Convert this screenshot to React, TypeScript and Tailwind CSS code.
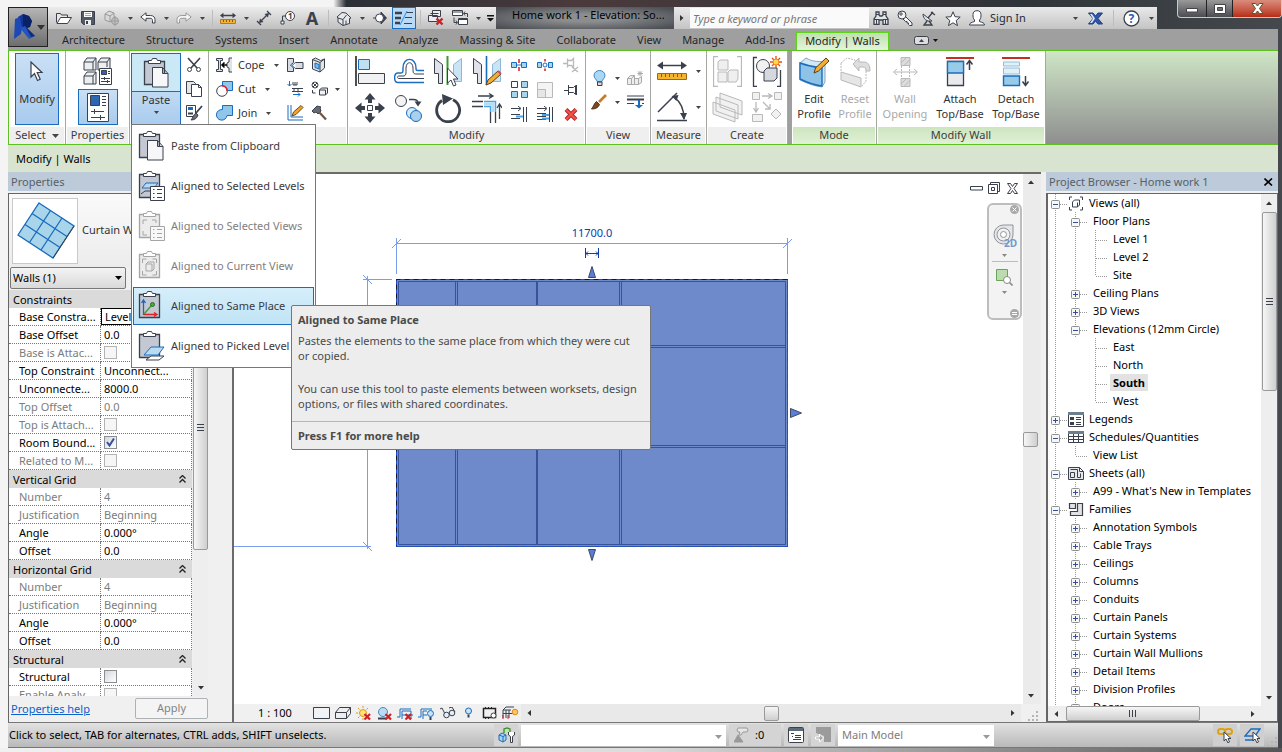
import type { ReactNode } from 'react'

const INK = '#3b414c'
const BLUE = '#1a6cbf'
const SKY = '#a9d5ec'
const GREY = '#b9b9b9'

interface IconProps {
  w: number
  h: number
  children: ReactNode
  stroke?: string
}

function Icon({ w, h, children, stroke = INK }: IconProps) {
  return (
    <svg width={w} height={h} viewBox={`0 0 ${w} ${h}`} fill="none" stroke={stroke} strokeWidth="1" className="shrink-0" aria-hidden="true">
      {children}
    </svg>
  )
}

function Caret({ color = '#444' }: { color?: string }) {
  return (
    <Icon w={5} h={3} stroke="none">
      <path d="M0 0h5L2.500 3z" fill={color} />
    </Icon>
  )
}

function ScrollArrow({ dir }: { dir: 'up' | 'down' | 'left' | 'right' }) {
  const paths = { up: 'M1 6l3-3.500l3 3.500z', down: 'M1 2h6L4 5.500z', left: 'M6 1v6L2.500 4z', right: 'M2 1v6l3.500-3z' }
  return (
    <Icon w={8} h={8} stroke="none">
      <path d={paths[dir]} fill="#333" />
    </Icon>
  )
}

/* ---------- quick access icons ---------- */

const openIcon = (
  <Icon w={16} h={12}>
    <path d="M.5 10.500V1.500h4l1 1.500h6v2" fill="#e8e8e8" />
    <path d="M1 11.500l3.500-6h11l-4 6z" fill="#fff" />
  </Icon>
)
const saveIcon = (
  <Icon w={14} h={14}>
    <path d="M.5.5h13v13h-11l-2-2z" fill="#535965" />
    <path d="M3 1h8v5H3z" fill="#fff" stroke="none" />
    <path d="M4 2.500h6M4 4.500h6" stroke="#9aa" />
    <path d="M4 9h6v5H4z" fill="#eee" stroke="none" />
    <path d="M5 10h2v3H5z" fill={INK} stroke="none" />
  </Icon>
)
const syncIcon = (
  <Icon w={16} h={16} stroke="#999">
    <path d="M1 4l4-3 5 2v6l-4 3-5-2zM1 4l5 2 4-3M6 6v6" fill="#d9d9d9" />
    <circle cx="11" cy="11" r="3.500" fill="#c4c4c4" />
    <path d="M11 6v10M7.500 11h7" />
  </Icon>
)
const undoIcon = (
  <Icon w={16} h={12}>
    <path d="M.8 5L6 .8v2.700h4.500c3 0 4.500 2 4.500 4v3.500h-2.500V8.500c0-1.500-.8-2.200-2.300-2.200H6v2.900z" fill="#fff" />
  </Icon>
)
const redoIcon = (
  <Icon w={16} h={12} stroke="#999">
    <path d="M15.200 5L10 .8v2.700H5.500C2.500 3.500 1 5.500 1 7.500V11h2.500V8.500c0-1.500.8-2.200 2.300-2.200H10v2.900z" fill="#f4f4f4" />
  </Icon>
)
const rulerSmall = (
  <Icon w={16} h={11}>
    <path d="M2 2.500h12M3.500.5l-2.500 2 2.500 2M12.500.5l2.500 2-2.500 2" strokeWidth="1.300" />
    <path d="M.5 6.500h15v4H.5z" fill="#f2b431" stroke="#b7791a" />
    <path d="M3.500 7v2M6.500 7v2M9.500 7v2M12.500 7v2" stroke="#8a5a10" />
  </Icon>
)
const dimIcon = (
  <Icon w={16} h={16}>
    <path d="M4 12L12 4M11 1l4 4M1 11l4 4" strokeWidth="1.300" />
    <path d="M8.500 4l4.500-1-1 4.500zM7.500 12L3 13l1-4.500z" fill={INK} stroke="none" />
  </Icon>
)
const tagIcon = (
  <Icon w={16} h={14}>
    <circle cx="10" cy="5" r="4.500" fill="#fff" />
    <path d="M5.500 5H2.500v5" />
    <path d="M1 10h3v3H1z" fill="#fff" />
    <text x="8" y="8" fontSize="8" fontWeight="700" fill={INK} stroke="none" fontFamily="Noto Sans, sans-serif">1</text>
  </Icon>
)
const houseIcon = (
  <Icon w={16} h={15}>
    <path d="M1 6l5-4.500 4 .5 5 5-1.500.5v5L7 14.500 2 11V7z" fill="#e6e8eb" />
    <path d="M7 14.500V8.500M2 7l5 1.500L10.500 4M10 9.500v4" />
  </Icon>
)
const sectionIcon = (
  <Icon w={14} h={14}>
    <path d="M8 1l5.500 6L8 13z" fill={INK} />
    <circle cx="6.500" cy="7" r="4" fill="#fff" />
    <path d="M0 7h2.500" />
  </Icon>
)
const thinIcon = (
  <Icon w={18} h={14}>
    <path d="M0 2h7M0 7h6M0 12h5" strokeWidth="2.400" />
    <path d="M11 1.500h7M10 6.500h7M9 12.500h8" />
    <path d="M12 0L5 14" stroke="#2a8ff0" />
  </Icon>
)
const closeHiddenIcon = (
  <Icon w={16} h={16}>
    <path d="M4.500.5h8v6h-8zM.5 5.500h9v6h-9zM2.500 3.500h8" fill="#eee" />
    <path d="M8.500 8.500l6 6M14.500 8.500l-6 6" stroke="#d21f26" strokeWidth="2.400" />
  </Icon>
)
const switchIcon = (
  <Icon w={17} h={16}>
    <path d="M.5.5h10v5H.5zM6.500 8.500h9v6h-9z" fill="#fff" />
    <path d="M.5 2h10M6.500 9.500h9" />
    <path d="M2 7.500v5h3M4 10.500l1.500 2-1.500 2M15.500 7V3.500H12M13 1.500l-1.500 2 1.500 2" />
  </Icon>
)

/* ---------- info centre icons ---------- */

const binoculars = (
  <Icon w={16} h={14}>
    <path d="M3 1h3v3l1 1h2l1-1V1h3v4l2 3v5.500h-5V9H6v4.500H1V8l2-3z" fill="#e4e7ea" strokeWidth="1.300" />
    <path d="M3 3.500h3M10 3.500h3M1 8.500h5M10 8.500h5M3.500 9v4M12.500 9v4" />
  </Icon>
)
const keyIcon = (
  <Icon w={16} h={16}>
    <path d="M8.500 6.500l6.500 6.500v2.500h-2.500l-1-1v-1.500h-1.500v-1.500H8.500L5.500 8.500" fill="#f5f5f5" />
    <circle cx="5" cy="5" r="4" fill="#f5f5f5" />
    <circle cx="4" cy="4" r="1.200" />
  </Icon>
)
const dishIcon = (
  <Icon w={14} h={15}>
    <path d="M1 3c0 5 4 8 9 7z" fill="#e3e6ea" />
    <path d="M6 7l5-6M9 1l4 3M5 10l-3 4h8l-3-4" strokeWidth="1.300" />
  </Icon>
)
const starIcon = (
  <Icon w={16} h={15}>
    <path d="M8 .8l2 4.900 5.200.4-4 3.400 1.300 5.100L8 11.800l-4.500 2.800 1.300-5.100-4-3.400L6 5.700z" fill="#fff" />
  </Icon>
)
const userIcon = (
  <Icon w={16} h={16}>
    <path d="M.5 15c0-2 2-2.500 5-3.500V10C4 8.500 4 6.500 4 4.500 4 2 5.500.7 8 .7s4 1.300 4 3.800c0 2 0 4-1.500 5.500v1.500c3 1 5 1.500 5 3.500z" fill="#fff" />
  </Icon>
)
const exchangeIcon = (
  <Icon w={15} h={13}>
    <path d="M.5 1h4.500l2.500 3L10 1h4.500L10 6.500l4.500 5.500H10L7.500 9 5 12H.5L5 6.500z" fill="#2f55a8" stroke="#24407e" />
    <path d="M2 2h2l3 4.500L4 11H2l3-4.500z" fill="#dbe4f5" stroke="none" />
  </Icon>
)
const helpIcon = (
  <Icon w={17} h={17}>
    <circle cx="8.500" cy="8.500" r="7.500" fill="#fff" strokeWidth="1.300" />
    <text x="5.500" y="13" fontSize="12" fontWeight="700" fill="#1a5fc0" stroke="none" fontFamily="Noto Sans, sans-serif">?</text>
  </Icon>
)

/* ---------- ribbon icons ---------- */

const cursorIcon = (
  <Icon w={14} h={21}>
    <path d="M1 1v15l3.500-3.500 3 7 2.700-1.200-3-6.800H12z" fill="#fff" strokeWidth="1.200" />
  </Icon>
)
const familyTypesIcon = (
  <Icon w={30} h={29}>
    <path d="M1 13V5l3-4h9v12zM15 13V5l3-4h9v12zM1 27v-8l3-4h9v12zM1 5h9v8M10 5l3-4M15 5h9v5M24 5l3-4M1 19h9v8M10 19l3-4" fill="#eceef0" />
    <path d="M16.500 11.500h12v16h-12z" fill="#fff" />
    <path d="M18.500 13.500h5v4h-5z" fill="#2b66ae" stroke={INK} />
    <path d="M25 14.500h2M25 16.500h2M18 21.500h9M21.500 20v3M18 24.500h9M24.500 23v3" />
  </Icon>
)
const propertiesIcon = (
  <Icon w={22} h={29}>
    <path d="M.5.500h21v28h-21z" fill="#fff" />
    <path d="M3.500 2.500h9v10h-9z" fill="#2b66ae" />
    <path d="M15 3.500h4M15 6.500h4M15 9.500h4M15 12.500h4M4 18.500h13M7.500 16v5M4 24.500h14M13.500 22v5" />
  </Icon>
)

function Clipboard({ faded = false, children }: { faded?: boolean; children?: ReactNode }) {
  const line = faded ? '#a5a5a5' : INK
  return (
    <Icon w={28} h={32} stroke={line}>
      <path d="M2.500 4.500h20v23h-20z" fill={faded ? '#ececec' : '#c3c8d2'} strokeWidth="1.300" />
      <path d="M6.500 6.500v-3h3l1-2h4l1 2h3v3z" fill="#fff" />
      {children}
    </Icon>
  )
}

const pasteIcon = (
  <Clipboard>
    <path d="M10.500 10.500h10l5.500 6v13.500H10.500zM20.500 10.500v6H26" fill="#f7f7f9" />
  </Clipboard>
)
const levelsIcon = (
  <Clipboard>
    <path d="M5 18l4-5h12l-4 5z" fill="#b9dcf2" stroke={BLUE} />
    <path d="M4 24l4-3h7" stroke={INK} />
    <path d="M13.500 16.500h14v14h-14z" fill="#fff" />
    <path d="M16 19.500h1.500M20 19.500h5M16 23.500h1.500M20 23.500h5M16 27.500h1.500M20 27.500h5" />
  </Clipboard>
)
const viewsIcon = (
  <Clipboard faded>
    <path d="M6 14v-4h4M15 10h4v3M6 21v4h4" />
    <path d="M13.500 16.500h14v14h-14z" fill="#f8f8f8" />
    <path d="M16 19.500h1.500M20 19.500h5M16 23.500h1.500M20 23.500h5M16 27.500h1.500M20 27.500h5" />
  </Clipboard>
)
const currentIcon = (
  <Clipboard faded>
    <path d="M5.500 13v-4h4M15.500 9h4v4M5.500 21v4h4M15.500 25h4v-4M9 14h6v7H9zM9 14l2-2h6v7l-2 2" />
  </Clipboard>
)
const sameIcon = (
  <Clipboard>
    <path d="M6.500 25V11M4.500 13l2-3 2 3" stroke="#1b63c4" strokeWidth="1.300" />
    <path d="M6.500 24.500h12M17 22.500l3 2-3 2" stroke="#e0212a" strokeWidth="1.300" />
    <path d="M7 24l7-8" stroke="#3f9a2e" strokeWidth="1.300" />
    <circle cx="15.500" cy="14.500" r="2" fill="#52a63c" stroke="#2c6e20" />
  </Clipboard>
)
const pickedIcon = (
  <Clipboard>
    <path d="M9 30l5-4h13l-5 4z" fill="#fff" />
    <path d="M7 25l7-8h13l-6 8z" fill="#b9dcf2" stroke={BLUE} />
  </Clipboard>
)

const scissors = (
  <Icon w={16} h={16}>
    <path d="M2 1l9 10M14 1L5 11" strokeWidth="1.600" />
    <circle cx="3.500" cy="12.500" r="2" />
    <circle cx="12.500" cy="12.500" r="2" />
  </Icon>
)
const copyPages = (
  <Icon w={17} h={16}>
    <path d="M.5.500h7l2 2v10h-9z" fill="#e4e6ea" />
    <path d="M5.500 3.500h7l3 3v9h-10zM12.500 3.500v3h3" fill="#fff" />
  </Icon>
)
const matchIcon = (
  <Icon w={17} h={16}>
    <path d="M.5.500h9v11h-9z" fill="#fff" />
    <path d="M2 2h5v3H2z" fill={BLUE} stroke="none" />
    <path d="M2 8.500h5M16 1l-6 7" strokeWidth="1.800" />
    <path d="M10 8l2 2c-1 3-3 5-7 5 2-2 2-5 5-7z" fill="#6d7078" />
  </Icon>
)
const copeIcon = (
  <Icon w={17} h={16}>
    <path d="M.5 1.500h6v2h-2v9h2v2h-6v-2h2v-9h-2zM16 1h-3v4l-2 1v4l2 1v4h3" fill="#e0e2e6" />
    <path d="M6 8h5M8.500 5.500L6 8l2.500 2.500" strokeWidth="1.600" stroke="#000" />
  </Icon>
)
const cutIcon = (
  <Icon w={17} h={16}>
    <path d="M6.500.500h10v9h-10z" fill="#8fc6ea" stroke={BLUE} />
    <circle cx="6" cy="10" r="5.300" fill="#fff" />
    <path d="M6 4.700A5.300 5.300 0 0 1 11.200 10" stroke="#e2202a" strokeWidth="1.600" />
  </Icon>
)
const joinIcon = (
  <Icon w={17} h={16}>
    <path d="M6.500.500h10v10h-5.500A5.300 5.300 0 1 1 6.500 4.600z" fill="#8fc6ea" stroke={BLUE} />
  </Icon>
)
const wallCutIcon = (
  <Icon w={17} h={14}>
    <path d="M.5.500h6v4l-3 2.500 3 3v3.500h-6zM8.500 4.500h7.500v6H8.500" fill="#d9dce0" />
    <path d="M9 4l-4 3.500L9 11" stroke={BLUE} />
  </Icon>
)
const wallJoinIcon = (
  <Icon w={16} h={16}>
    <path d="M1.500 2.500l3-1.500 5 2.500 4-1.500v9l-4.500 4-7.500-3zM1.500 2.500L9 5.500v9.500M9 5.500l4.500-3.500" fill="#e2e4e8" />
    <path d="M4 6l4 1.500V12L4 10.500z" fill="#7fb9e6" stroke={BLUE} />
  </Icon>
)
const splitFaceIcon = (
  <Icon w={17} h={16}>
    <path d="M2.500 0v5M.5 3l2 2 2-2M6 13.500h7M11 11.500l2 2-2 2" stroke={BLUE} />
    <path d="M6 1v3h4V1M8 1v3M5 7.500h11M5 10.500h11M7 7.500v3M11 7.500v3" />
  </Icon>
)
const demolishIcon = (
  <Icon w={17} h={16}>
    <circle cx="4" cy="4" r="3" />
    <path d="M2 2l4 4M6 2L2 6M1.500 9v3h3M8.500 9l2-2h6v5l-2 2h-6zM8.500 9h6v5" fill="#f1f1f1" />
  </Icon>
)
const beamIcon = (
  <Icon w={17} h={16}>
    <path d="M1 0v15h15M4 0v12h12" stroke={BLUE} />
    <path d="M5 11l1.500-4L14 .5l2 2L9 9.500z" fill="#f2a431" stroke="#6a4a1a" />
  </Icon>
)
const hammerIcon = (
  <Icon w={17} h={16}>
    <path d="M1 6l5-5 4 1-1 1 1 3-3 3-2-2-2 1z" fill="#666b74" />
    <path d="M8 7l7 7.500" stroke="#6e5544" strokeWidth="2.200" />
  </Icon>
)
const alignIcon = (
  <Icon w={30} h={30}>
    <path d="M1 0v30" strokeWidth="1.600" stroke="#222" />
    <path d="M3.500 3.500h11v10h-11z" fill="#bfe0f3" stroke={BLUE} />
    <path d="M3.500 17.500h26v10h-26z" fill="#f0f1f3" />
  </Icon>
)
const offsetIcon = (
  <Icon w={30} h={27}>
    <path d="M30 24.500H4c-4.500 0-4.500-9.500 0-9.500h3c2 0 2-1 2-5C9-1.500 22-1.500 22 10c0 2 0 2.500 2 2.500h6" stroke={BLUE} strokeWidth="1.400" />
    <path d="M30 20.500H5c-2 0-2-2.500 0-2.500h4c3.500 0 3-2.500 3-8 0-7 7-7 7 0 0 5 0 6 4 6h7" />
  </Icon>
)
const mirrorIcon = (
  <Icon w={30} h={31}>
    <path d="M1.500 2.500l8 6v19h-4v-10h-4z" fill="#dfe2e8" />
    <path d="M28.500 2.500l-8 6v17h8z" fill="#c9e4f4" stroke="#8cb9d8" />
    <path d="M14.500 0v29" stroke="#3f9a2e" strokeWidth="2" />
    <path d="M14.500 12v15l3.500-3 2.500 6 2.500-1-2.500-6h4.500z" fill="#fff" />
  </Icon>
)
const mirrorDrawIcon = (
  <Icon w={30} h={31}>
    <path d="M1.500 2.500l8 6v19h-4v-10h-4z" fill="#dfe2e8" />
    <path d="M28.500 2.500l-8 6v17h8z" fill="#c9e4f4" stroke="#8cb9d8" />
    <path d="M14.500 0v29" stroke={BLUE} strokeWidth="1.600" />
    <path d="M14 29l2-5 10-9 3 3-10 9z" fill="#f5ac33" stroke="#5b3f18" />
    <path d="M26 15l3 3" stroke="#c9506b" strokeWidth="2" />
  </Icon>
)
const moveIcon = (
  <Icon w={30} h={30} stroke="none">
    <path
      d="M15 0l5.500 6.500H17V10h-4V6.500H9.500zM15 30l5.500-6.500H17V20h-4v3.500H9.500zM0 15l6.500-5.500V13H10v4H6.500v3.500zM30 15l-6.500-5.500V13H20v4h3.500v3.500z"
      fill={INK}
    />
    <path d="M12.500 12.500h5v5h-5z" stroke={INK} fill="#fff" />
  </Icon>
)
const copyIcon = (
  <Icon w={30} h={30}>
    <circle cx="7" cy="8" r="5.500" fill="#f3f3f3" />
    <path d="M15 6.500h4c4 0 5 1 5 5" strokeWidth="1.500" />
    <path d="M20.500 8.500h7l-3.500 5z" fill={INK} stroke="none" />
    <circle cx="18" cy="20" r="5.500" fill="#d4e9f6" stroke={BLUE} />
    <circle cx="22" cy="23" r="5.500" fill="#a9d0ec" stroke={BLUE} />
  </Icon>
)
const rotateIcon = (
  <Icon w={30} h={30}>
    <path d="M9 7.500A11.500 11.500 0 1 0 20 6.800" strokeWidth="2.800" />
    <path d="M9 1l11 4.500L10 12z" fill={INK} stroke="none" />
  </Icon>
)
const trimIcon = (
  <Icon w={30} h={30}>
    <path d="M6 3h14M17 .5L21 3l-4 2.500M27.500 26V12M25 15l2.500-4L30 15" strokeWidth="1.300" />
    <path d="M0 8.500h11M0 13.500h11M18.500 19v11M23.500 19v11" strokeWidth="1.300" />
    <path d="M12 8.500h11.500V19M12 13.500h6.500V19" stroke="#4aa3e8" strokeWidth="1.500" />
    <path d="M12 11h9v8" stroke="#b5dcf5" strokeWidth="3" />
  </Icon>
)
const splitIcon = (
  <Icon w={16} h={12} stroke={BLUE}>
    <path d="M.5 3.500h5v5h-5zM10.500 3.500h5v5h-5z" fill={SKY} />
    <path d="M5 6h6" />
    <path d="M8 0v4M8 8v4" stroke="#d0202a" strokeWidth="1.500" />
  </Icon>
)
const splitGapIcon = (
  <Icon w={16} h={12} stroke={BLUE}>
    <path d="M.5 3.500h4v5h-4zM11.500 3.500h4v5h-4z" fill={SKY} />
    <circle cx="8" cy="6" r="2" />
    <path d="M8 0v2.500M8 9.500V12" stroke="#d0202a" strokeWidth="1.500" />
  </Icon>
)
const unpinIcon = (
  <Icon w={16} h={16} stroke={GREY}>
    <path d="M0 6.500h4M4.500 1.500v9M4.500 3.500h4l2-2v9l-2-2h-4M9 10l6 5M15 10l-6 5" strokeWidth="1.300" />
  </Icon>
)
const arrayIcon = (
  <Icon w={17} h={17} stroke={BLUE}>
    <path d="M10.500.500h6v6h-6zM.5 10.500h6v6h-6zM10.500 10.500h6v6h-6z" fill={SKY} />
    <path d="M.5.500h6v6h-6z" fill="#fff" stroke={INK} />
  </Icon>
)
const scaleIcon = (
  <Icon w={16} h={16} stroke={GREY}>
    <path d="M.5.500h15v15h-15z" fill="#f4f4f4" />
    <path d="M.5 7.500h8v8h-8z" fill="#e6e6e6" />
  </Icon>
)
const pinIcon = (
  <Icon w={14} h={12}>
    <path d="M0 6.500h4M4.500 1v10M4.500 3.500h5l2-2v9l-2-2h-5M12.500 1v10" />
  </Icon>
)
const trimOneIcon = (
  <Icon w={17} h={16}>
    <path d="M0 2.500h9M7 0l3 2.500L7 5M0 8.500h9M0 12.500h9M12.500 1v15M15.500 1v15" />
    <path d="M5 10.500h7" stroke="#4aa3e8" strokeWidth="2" />
  </Icon>
)
const trimManyIcon = (
  <Icon w={17} h={16}>
    <path d="M0 2.500h9M7 0l3 2.500L7 5M0 7.500h9M0 10.500h9M0 13.500h9M12.500 1v15M15.500 1v15" />
    <path d="M5 9h7M5 12.500h7" stroke="#4aa3e8" strokeWidth="2" />
  </Icon>
)
const deleteIcon = (
  <Icon w={14} h={13}>
    <path d="M2 1.500l10 10M12 1.500l-10 10" stroke="#a81f22" strokeWidth="4" />
    <path d="M2 1.500l10 10M12 1.500l-10 10" stroke="#f2504a" strokeWidth="2.400" />
  </Icon>
)
const bulbIcon = (
  <Icon w={13} h={17}>
    <path d="M4 11.500C4 9.500 1 8.500 1 5.500a5.500 5 0 0 1 11 0c0 3-3 4-3 6z" fill="#a9d7f5" stroke="#3a84c0" />
    <path d="M4.500 12h4.500v3.500H4.500z" fill="#d9d9d9" />
  </Icon>
)
const revealIcon = (
  <Icon w={17} h={14} stroke="#a9a9a9">
    <path d="M.5 7.500l3-3h4v9h-7zM.5 7.500h4v6M4.500 7.500l3-3M7.500 7.500h4v6h-4M11.500 7.500l3-2v6l-3 2" fill="#eee" />
    <path d="M13 0v5M10.500 2.500h5.500M11 .5l4 4M15 .5l-4 4" />
  </Icon>
)
const brushIcon = (
  <Icon w={17} h={16}>
    <path d="M15 1l-7 7" stroke="#c9792a" strokeWidth="2.600" />
    <path d="M5.500 7.500l3 3c-1 3-4 4.500-8 4.500 2-2 2-5 5-7.500z" fill="#7a4a24" stroke="#4e2f16" />
  </Icon>
)
const lineworkIcon = (
  <Icon w={17} h={14}>
    <path d="M0 1h17" strokeWidth="1" />
    <path d="M0 4.500h17" strokeWidth="2" />
    <path d="M0 8.500h7M15 8.500h2" />
    <path d="M11 5v5h-3l4 3.500 4-3.500h-3V5z" fill={BLUE} stroke="none" />
  </Icon>
)
const measureIcon = (
  <Icon w={30} h={20}>
    <path d="M3 4.500h24" strokeWidth="1.500" />
    <path d="M6 .5L0 4.500l6 4zM24 .5l6 4-6 4z" fill={INK} stroke="none" />
    <path d="M.5 12.500h29v6H.5z" fill="#f2b431" stroke="#9c6a16" />
    <path d="M4.500 13v3M8.500 13v3M12.500 13v3M16.500 13v3M20.500 13v3M24.500 13v3" stroke="#8a5a10" />
  </Icon>
)
const angleIcon = (
  <Icon w={30} h={30}>
    <path d="M0 28.500h30M1 20L20 1" strokeWidth="1.500" />
    <path d="M17 5c7 5 10 13 10 22" strokeWidth="1.500" />
    <path d="M14.500 4l7-1-2 6zM23 21l4 7 3-7z" fill={INK} stroke="none" />
  </Icon>
)
const groupIcon = (
  <Icon w={29} h={31} stroke={GREY}>
    <path d="M5 .5H.5v30H5M24 .5h4.500v30H24" strokeWidth="1.300" />
    <path d="M5 6l2-2h8v10H5zM5 16h9v10H5zM15 16l2-2h8v9l-2 3h-8z" fill="#efefef" />
  </Icon>
)
const similarIcon = (
  <Icon w={30} h={31}>
    <path d="M5 1.500H1.500v29H5M25 30.500h3.500V14" strokeWidth="1.300" />
    <circle cx="11" cy="10" r="6.500" fill="#f1f1f1" />
    <path d="M12 15l3-3h10v10l-3 3H12z" fill="#d5d8de" />
    <path d="M24 0v12M18 6h12M20 2l8 8M28 2l-8 8" stroke="#e2481e" strokeWidth="1.300" />
    <circle cx="24" cy="6" r="3" fill="#ffd84a" stroke="#f08a1c" />
  </Icon>
)
const partsIcon = (
  <Icon w={32} h={31} stroke={GREY}>
    <path d="M8 1l22 8v14L8 15zM4 5l22 8v14L4 19zM1 10l22 8v12L1 22z" fill="#f1f1f1" />
  </Icon>
)
const assemblyIcon = (
  <Icon w={30} h={30} stroke={GREY}>
    <path d="M.5.500h7v7h-7zM22.500.500h7v7h-7zM.5 22.500h10v7H.5zM24 17l5 5-5 5-5-5z" fill="#f1f1f1" />
    <path d="M10 4h9M16 1.500L20 4l-4 2.500M4 10v9M1.500 16L4 20l2.500-4M11 10l7 7M18 12v5h-5" strokeWidth="1.300" />
  </Icon>
)
const editProfileIcon = (
  <Icon w={31} h={31}>
    <path d="M1 6l6-5c7 4 10 3 19 4v20l-3 5c-8-1-13-3-22-7z" fill="#d3e8f4" stroke="#7fa8c4" />
    <path d="M1 6c8 3 13 4 22 5v18C14 28 9 26 1 22z" fill="#8cc3e6" stroke={BLUE} strokeWidth="1.400" />
    <path d="M15 16l1.500-5L27 1l3 3-10.500 10z" fill="#f5ac33" stroke="#5b3f18" />
  </Icon>
)
const resetProfileIcon = (
  <Icon w={31} h={31} stroke={GREY}>
    <path d="M1 6l6-5 8 2v7M1 6v8M26 14v10l-4 5" strokeDasharray="2 1" />
    <path d="M1 15l20 6v9L1 23z" fill="#e6e6e6" />
    <path d="M13 7l6-6v4h5c4 0 6 3 6 9h-4c0-3-1-4-3-4h-4v4z" fill="#dedede" />
  </Icon>
)
const wallOpeningIcon = (
  <Icon w={25} h={30} stroke={GREY}>
    <path d="M8 .5h9v8H8zM8 21.500h9v8H8z" fill="#dcdcdc" />
    <path d="M8 6l6-6M11 8.500l6-6M8 27l6-6M11 29.500l6-6M1 15h23M4 12l-3.500 3L4 18M21 12l3.500 3L21 18" />
    <path d="M8.500 9v12M16.500 9v12" strokeDasharray="2 1" />
  </Icon>
)
const attachIcon = (
  <Icon w={29} h={30}>
    <path d="M0 1h28" stroke="#c23020" strokeWidth="2" />
    <path d="M1.500 4.500h16v24h-16z" fill="#e8eaee" strokeWidth="1.300" />
    <path d="M1.500 4.500h16v11.500h-16z" fill="#97cbe8" stroke={BLUE} strokeWidth="1.300" />
    <path d="M23.500 13V4M20.500 7.500l3-4 3 4" strokeWidth="1.500" />
  </Icon>
)
const detachIcon = (
  <Icon w={29} h={30}>
    <path d="M0 1h28" stroke="#c23020" strokeWidth="2" />
    <path d="M1.500 5h16v4h-16zM1.500 11h16v6h-16z" fill="#e2f0f8" stroke="#8fbedd" />
    <path d="M1.500 19h16v9.500h-16z" fill="#97cbe8" stroke={BLUE} strokeWidth="1.400" />
    <path d="M23.500 19v9M20.500 24.500l3 4 3-4" strokeWidth="1.500" />
  </Icon>
)

/* ---------- shared controls ---------- */

function Tool({ label, children, className = 'w-6 h-5' }: { label: string; children: ReactNode; className?: string }) {
  return (
    <button type="button" aria-label={label} className={`flex shrink-0 items-center justify-center ${className}`}>
      {children}
    </button>
  )
}

function Drop({ label }: { label: string }) {
  return (
    <Tool label={label} className="h-5 w-3">
      <Caret />
    </Tool>
  )
}

function Divider() {
  return <span className="flex h-4 w-2 shrink-0 justify-center"><span className="border-l border-[#bcbcbc]" /></span>
}

function QuickAccess() {
  return (
    <div className="flex h-[22px] items-center bg-linear-to-b from-[#ececec] to-[#c0c0c0] pl-11">
      <Tool label="Open">{openIcon}</Tool>
      <Tool label="Save">{saveIcon}</Tool>
      <Tool label="Synchronize">{syncIcon}</Tool>
      <Drop label="Synchronize options" />
      <Tool label="Undo">{undoIcon}</Tool>
      <Drop label="Undo history" />
      <Tool label="Redo">{redoIcon}</Tool>
      <Drop label="Redo history" />
      <Divider />
      <Tool label="Measure">{rulerSmall}</Tool>
      <Drop label="Measure options" />
      <Tool label="Aligned dimension">{dimIcon}</Tool>
      <Tool label="Tag by category">{tagIcon}</Tool>
      <Tool label="Text">
        <span className="text-[18px] leading-5 font-bold text-[#3b414c]">A</span>
      </Tool>
      <Divider />
      <Tool label="3D view">{houseIcon}</Tool>
      <Drop label="3D view options" />
      <Tool label="Section">{sectionIcon}</Tool>
      <Tool label="Thin lines" className="h-[22px] w-6 border border-[#1a6cbf] bg-[#b9d9f4]">{thinIcon}</Tool>
      <Divider />
      <Tool label="Close hidden windows">{closeHiddenIcon}</Tool>
      <Tool label="Switch windows">{switchIcon}</Tool>
      <Drop label="Switch windows options" />
      <Tool label="Customize" className="h-5 w-3">
        <Icon w={7} h={7} stroke="none">
          <path d="M0 0h7v1.500H0zM0 3h7L3.500 6.500z" fill="#111" />
        </Icon>
      </Tool>
    </div>
  )
}

function TitleRow() {
  return (
    <header className="flex h-[22px] items-stretch">
      <QuickAccess />
      <div className="min-w-0 flex-1 overflow-hidden bg-[radial-gradient(ellipse_at_center,#8b8d8f_25%,#4c4f54_90%)] pl-4 text-[11px] leading-4 whitespace-nowrap text-black">
        Home work 1 - Elevation: So...
      </div>
      <div className="flex items-center bg-linear-to-b from-[#e9e9e9] to-[#c4c4c4]">
        <Tool label="Expand search" className="h-5 w-4">
          <ScrollArrow dir="right" />
        </Tool>
        <input
          aria-label="Search help"
          placeholder="Type a keyword or phrase"
          className="h-5 w-[179px] bg-[#fafafa] px-[3px] text-[11px] italic placeholder:text-[#777]"
        />
        <Tool label="Search">{binoculars}</Tool>
        <Tool label="Subscription">{keyIcon}</Tool>
        <Tool label="Communication">{dishIcon}</Tool>
        <Tool label="Favorites">{starIcon}</Tool>
        <button type="button" className="flex w-[104px] items-center gap-[5px] pl-1 text-[11px] text-[#1f2a36]">
          {userIcon}
          Sign In
        </button>
        <Drop label="Account" />
        <Tool label="Exchange apps" className="h-5 w-7">{exchangeIcon}</Tool>
        <Divider />
        <Tool label="Help" className="h-5 w-7">{helpIcon}</Tool>
        <Drop label="Help options" />
      </div>
      <div className="w-[121px] shrink-0" />
    </header>
  )
}

function WindowButtons() {
  return (
    <div className="absolute top-0 right-0 flex h-[18px] overflow-hidden rounded-b border border-t-0 border-[#c9c9c9] bg-linear-to-b from-[#9a9a9a] to-[#4a4d52]">
      <Tool label="Minimize" className="w-[29px] border-r border-[#222] pt-1">
        <Icon w={12} h={5} stroke="#444"><path d="M.5.500h11v3.500H.5z" fill="#fff" /></Icon>
      </Tool>
      <Tool label="Maximize" className="w-[26px] border-r border-[#222]">
        <Icon w={12} h={10} stroke="#444"><path d="M.5.500h11v9H.5zM3.500 3.500h5v3h-5z" fill="#fff" fillRule="evenodd" /></Icon>
      </Tool>
      <Tool label="Close" className="w-[48px] bg-linear-to-b from-[#d98c7c] to-[#b72a12]">
        <Icon w={13} h={11} stroke="#553">
          <path d="M1 .5h3.500l2 2.500 2-2.500H12L8.500 5.500l3.500 5H8.500l-2-2.500-2 2.500H1l3.500-5z" fill="#fff" />
        </Icon>
      </Tool>
    </div>
  )
}

const tabs = ['Architecture', 'Structure', 'Systems', 'Insert', 'Annotate', 'Analyze', 'Massing & Site', 'Collaborate', 'View', 'Manage', 'Add-Ins']

function Tabs() {
  return (
    <nav className="flex h-[21px] items-end gap-px bg-[#9f9f9f] pl-11 text-[11px] text-[#262626]">
      {tabs.map((tab) => (
        <button key={tab} type="button" className="h-[19px] px-[10px] whitespace-nowrap">
          {tab}
        </button>
      ))}
      <button type="button" className="h-[18px] border border-b-0 border-[#5fd21c] bg-linear-to-b from-[#bfe0ae] to-[#e4f5da] px-2 whitespace-nowrap">
        Modify | Walls
      </button>
      <Tool label="Minimize ribbon" className="ml-6 h-5 gap-1">
        <Icon w={15} h={9}>
          <rect x=".5" y=".5" width="14" height="8" rx="2" fill="#ddd" />
          <path d="M5 6h5L7.500 3z" fill={INK} stroke="none" />
        </Icon>
        <Caret color="#111" />
      </Tool>
    </nav>
  )
}

/* ---------- ribbon ---------- */

function Panel({ title, green = false, children }: { title?: ReactNode; green?: boolean; children: ReactNode }) {
  return (
    <section className="flex shrink-0 flex-col border-r border-[#a3a8a0] bg-white">
      <div className="flex flex-1 px-px pt-[2px]">{children}</div>
      <div
        className={`mx-px flex h-[17px] items-center justify-center gap-[6px] text-[11px] text-[#3c3c3c] ${green ? 'bg-linear-to-b from-[#cde4c0] to-[#dff2d5]' : 'bg-[#efefef]'}`}
      >
        {title}
      </div>
    </section>
  )
}

function BigButton({ icon, lines, disabled = false, width }: { icon: ReactNode; lines: string[]; disabled?: boolean; width: string }) {
  return (
    <button type="button" disabled={disabled} className={`flex flex-col items-center text-[11px] leading-[15px] ${width} ${disabled ? 'text-[#a9a9a9]' : 'text-[#333]'}`}>
      <span className="flex h-[38px] items-center">{icon}</span>
      {lines.map((line) => (
        <span key={line}>{line}</span>
      ))}
    </button>
  )
}

const geometryRows = [
  { name: 'Cope', icon: copeIcon, a: wallCutIcon, b: wallJoinIcon },
  { name: 'Cut', icon: cutIcon, a: splitFaceIcon, b: demolishIcon, more: true },
  { name: 'Join', icon: joinIcon, a: beamIcon, b: hammerIcon },
]

const modifyLarge = [
  ['Align', alignIcon],
  ['Offset', offsetIcon],
  ['Mirror - pick axis', mirrorIcon],
  ['Mirror - draw axis', mirrorDrawIcon],
  ['Move', moveIcon],
  ['Copy', copyIcon],
  ['Rotate', rotateIcon],
  ['Trim to corner', trimIcon],
] as const

const modifySmall = [
  ['Split element', splitIcon],
  ['Split with gap', splitGapIcon],
  ['Unpin', unpinIcon],
  ['Array', arrayIcon],
  ['Scale', scaleIcon],
  ['Pin', pinIcon],
  ['Trim single', trimOneIcon],
  ['Trim multiple', trimManyIcon],
  ['Delete', deleteIcon],
] as const

const pasteItems = [
  { name: 'Paste from Clipboard', icon: pasteIcon },
  { name: 'Aligned to Selected Levels', icon: levelsIcon },
  { name: 'Aligned to Selected Views', icon: viewsIcon, disabled: true },
  { name: 'Aligned to Current View', icon: currentIcon, disabled: true },
  { name: 'Aligned to Same Place', icon: sameIcon, active: true },
  { name: 'Aligned to Picked Level', icon: pickedIcon },
]

function PasteMenu() {
  return (
    <div className="absolute top-[71px] left-0 z-30 flex w-[185px] flex-col gap-[2px] border border-[#777] bg-white px-px py-[2px] text-[11px] text-[#3a3a3a]">
      {pasteItems.map((item) => (
        <button
          key={item.name}
          type="button"
          disabled={item.disabled}
          className={`flex h-[38px] items-center gap-[6px] border pl-[3px] text-left whitespace-nowrap ${item.active ? 'border-[#1a6cbf] bg-linear-to-b from-[#d6eefa] to-[#c0e4f6]' : 'border-transparent'} ${item.disabled ? 'text-[#808080]' : ''}`}
        >
          {item.icon}
          {item.name}
        </button>
      ))}
      <PasteTip />
    </div>
  )
}

function PasteTip() {
  return (
    <div role="tooltip" className="absolute top-[180px] left-[159px] z-40 w-[360px] rounded-xs border border-[#777] bg-[#ededed] pt-[6px] text-[11px] leading-[15px] text-[#4a4a4a]">
      <div className="pr-2 pl-[6px]">
        <p className="mb-[6px] font-bold">Aligned to Same Place</p>
        <p className="mb-[18px]">Pastes the elements to the same place from which they were cut or copied.</p>
        <p className="mb-[10px]">You can use this tool to paste elements between worksets, design options, or files with shared coordinates.</p>
      </div>
      <p className="border-t border-[#b5b5b5] px-[6px] py-[6px] font-bold">Press F1 for more help</p>
    </div>
  )
}

function Ribbon() {
  return (
    <div className="flex h-[95px] border border-r-0 border-[#5bc11f] bg-linear-to-b from-[#cfe6c6] to-[#8f8f8f]">
      <Panel title={<>Select <Icon w={7} h={4} stroke="none"><path d="M0 0h7L3.500 4z" fill="#444" /></Icon></>}>
        <button type="button" className="mx-[5px] flex h-[72px] w-11 flex-col items-center border border-[#1a6cbf] bg-linear-to-b from-[#c9e0f5] to-[#a9cbee] pt-[7px] text-[11px] leading-[15px] text-[#333]">
          {cursorIcon}
          <span className="mt-[9px]">Modify</span>
        </button>
      </Panel>
      <Panel title="Properties">
        <div className="flex w-[61px] flex-col items-center">
          <Tool label="Family types" className="h-9 w-10">{familyTypesIcon}</Tool>
          <Tool label="Properties" className="h-9 w-10 border border-[#1a6cbf] bg-linear-to-b from-[#c9e0f5] to-[#a9cbee]">{propertiesIcon}</Tool>
        </div>
      </Panel>
      <Panel>
        <div className="relative">
          <div className="flex h-[74px] w-[50px] flex-col border border-[#1a6cbf]">
            <button type="button" aria-label="Paste" className="flex h-[37px] items-center justify-center bg-[#cbe8f6]">
              {pasteIcon}
            </button>
            <button type="button" className="flex flex-1 flex-col items-center gap-1 border-t border-[#1a6cbf] bg-linear-to-b from-[#c0daf3] to-[#a9cbee] text-[11px] leading-[15px] text-[#333]">
              Paste
              <Caret />
            </button>
          </div>
          <PasteMenu />
        </div>
        <div className="flex w-[26px] flex-col">
          <Tool label="Cut to clipboard" className="h-6">{scissors}</Tool>
          <Tool label="Copy to clipboard" className="h-6">{copyPages}</Tool>
          <Tool label="Match type" className="h-6">{matchIcon}</Tool>
        </div>
      </Panel>
      <Panel>
        <div className="flex w-[136px] flex-col pl-[3px]">
          {geometryRows.map((row) => (
            <div key={row.name} className="flex h-6 items-center">
              <button type="button" className="flex w-[70px] items-center gap-[5px] pl-[3px] text-[11px] text-[#333]">
                {row.icon}
                {row.name}
                <span className="pl-1"><Caret /></span>
              </button>
              <Tool label={`${row.name} tool`}>{row.a}</Tool>
              <Tool label={`${row.name} option`}>{row.b}</Tool>
              {row.more && <Drop label="More" />}
            </div>
          ))}
        </div>
      </Panel>
      <Panel title="Modify">
        <div className="grid grid-cols-[repeat(4,39px)] pl-px">
          {modifyLarge.map(([name, icon]) => (
            <Tool key={name} label={name} className="h-9">{icon}</Tool>
          ))}
        </div>
        <div className="grid grid-cols-[repeat(3,26px)]">
          {modifySmall.map(([name, icon]) => (
            <Tool key={name} label={name} className="h-6">{icon}</Tool>
          ))}
        </div>
      </Panel>
      <Panel title="View">
        <div className="grid w-[62px] grid-cols-[24px_12px_24px] content-center items-center">
          <Tool label="Hide in view" className="h-6">{bulbIcon}</Tool>
          <Drop label="Hide options" />
          <Tool label="Displace elements" className="h-6">{revealIcon}</Tool>
          <Tool label="Override graphics" className="h-6">{brushIcon}</Tool>
          <Drop label="Override options" />
          <Tool label="Linework" className="h-6">{lineworkIcon}</Tool>
        </div>
      </Panel>
      <Panel title="Measure">
        <div className="grid grid-cols-[40px_13px] content-start items-center">
          <Tool label="Measure between" className="h-9">{measureIcon}</Tool>
          <Drop label="Measure between options" />
          <Tool label="Angular dimension" className="h-9">{angleIcon}</Tool>
          <Drop label="Dimension options" />
        </div>
      </Panel>
      <Panel title="Create">
        <div className="grid grid-cols-[repeat(2,39px)] content-start">
          <Tool label="Create group" className="h-9">{groupIcon}</Tool>
          <Tool label="Create similar" className="h-9">{similarIcon}</Tool>
          <Tool label="Create parts" className="h-9">{partsIcon}</Tool>
          <Tool label="Create assembly" className="h-9">{assemblyIcon}</Tool>
        </div>
      </Panel>
      <div className="w-1 bg-[#9f9f9f]" />
      <Panel title="Mode" green>
        <BigButton icon={editProfileIcon} lines={['Edit', 'Profile']} width="w-[42px]" />
        <BigButton icon={resetProfileIcon} lines={['Reset', 'Profile']} width="w-[40px]" disabled />
      </Panel>
      <Panel title="Modify Wall" green>
        <BigButton icon={wallOpeningIcon} lines={['Wall', 'Opening']} width="w-[54px]" disabled />
        <BigButton icon={attachIcon} lines={['Attach', 'Top/Base']} width="w-[56px]" />
        <BigButton icon={detachIcon} lines={['Detach', 'Top/Base']} width="w-[56px]" />
      </Panel>
    </div>
  )
}

/* ---------- properties palette ---------- */

interface Prop {
  name: string
  value?: string
  check?: boolean
  off?: boolean
}

const groups: { title: string; rows: Prop[] }[] = [
  {
    title: 'Constraints',
    rows: [
      { name: 'Base Constra...', value: 'Level 1' },
      { name: 'Base Offset', value: '0.0' },
      { name: 'Base is Attac...', check: false, off: true },
      { name: 'Top Constraint', value: 'Unconnect...' },
      { name: 'Unconnecte...', value: '8000.0' },
      { name: 'Top Offset', value: '0.0', off: true },
      { name: 'Top is Attach...', check: false, off: true },
      { name: 'Room Bound...', check: true },
      { name: 'Related to M...', check: false, off: true },
    ],
  },
  {
    title: 'Vertical Grid',
    rows: [
      { name: 'Number', value: '4', off: true },
      { name: 'Justification', value: 'Beginning', off: true },
      { name: 'Angle', value: '0.000°' },
      { name: 'Offset', value: '0.0' },
    ],
  },
  {
    title: 'Horizontal Grid',
    rows: [
      { name: 'Number', value: '4', off: true },
      { name: 'Justification', value: 'Beginning', off: true },
      { name: 'Angle', value: '0.000°' },
      { name: 'Offset', value: '0.0' },
    ],
  },
  {
    title: 'Structural',
    rows: [
      { name: 'Structural', check: false },
      { name: 'Enable Analy...', check: false, off: true },
    ],
  },
]

function PropRow({ id, row }: { id: string; row: Prop }) {
  const active = row.name === 'Base Constra...'
  return (
    <tr className={`h-[18px] ${row.off ? 'text-[#7c7c7c]' : 'text-black'}`}>
      <th scope="row" className="overflow-hidden border-r border-b border-dotted border-[#777] p-0 pl-[10px] text-left font-normal whitespace-nowrap">
        <label htmlFor={id}>{row.name}</label>
      </th>
      <td className="border-r border-b border-dotted border-[#777] p-0">
        {row.check === undefined ? (
          <input
            id={id}
            defaultValue={row.value}
            disabled={row.off}
            className={`block h-[17px] w-full px-[3px] ${active ? 'border border-black' : ''}`}
          />
        ) : (
          <span className="relative ml-[3px] block size-[13px]">
            <input
              id={id}
              type="checkbox"
              defaultChecked={row.check}
              disabled={row.off}
              className={`block size-[13px] appearance-none border ${row.off ? 'border-[#b4b4b4] bg-[#f6f6f6]' : 'border-[#8a8f94] bg-linear-to-br from-[#d5d8dc] to-white'}`}
            />
            {row.check && (
              <span className="pointer-events-none absolute inset-[2px]">
                <Icon w={9} h={9} stroke="#33519c"><path d="M1 4l2.500 3.500L8 .5" strokeWidth="2" /></Icon>
              </span>
            )}
          </span>
        )}
      </td>
    </tr>
  )
}

const curtainThumb = (
  <Icon w={64} h={64} stroke={BLUE}>
    <path d="M26 4l35 23-21 32L5 36z" fill="#a9d5ea" strokeWidth="1.300" />
    <path d="M37.500 11.500L16.500 43.500M49 19L28 51M19 14.500l35 23M12 25.500l35 23" strokeWidth="1.300" />
    <path d="M61 27L40 59" stroke={INK} />
  </Icon>
)

function Properties() {
  return (
    <aside className="flex w-[224px] shrink-0 flex-col bg-[#f0f0f0] text-[11px]">
      <h2 className="h-[19px] bg-[#bccad9] pl-[3px] leading-[19px] text-[#55606b]">Properties</h2>
      <div className="mt-[2px] flex min-h-0 flex-1 flex-col border-t border-l border-[#666]">
        <div className="flex h-[73px] items-center gap-[4px] bg-linear-to-b from-[#fafafa] to-[#ececec] pl-[3px] text-[#333]">
          <span className="flex size-[66px] items-center justify-center border border-[#c9c9c9] bg-white">{curtainThumb}</span>
          Curtain Wall
        </div>
        <div className="relative mb-px ml-px w-[116px]">
          <select aria-label="Category filter" className="h-[22px] w-full appearance-none rounded-xs border border-[#777] bg-linear-to-b from-[#f4f4f4] to-[#d9d9d9] px-[2px]">
            <option>Walls (1)</option>
          </select>
          <span className="pointer-events-none absolute top-[9px] right-1">
            <Icon w={7} h={4} stroke="none"><path d="M0 0h7L3.500 4z" fill="#000" /></Icon>
          </span>
        </div>
        <div className="flex min-h-0 flex-1">
          <div className="min-h-0 w-[183px] overflow-hidden bg-white">
            <table className="w-full table-fixed border-separate border-spacing-0 leading-[17px]">
              <colgroup>
                <col className="w-[92px]" />
                <col />
              </colgroup>
              {groups.map((group) => (
                <tbody key={group.title}>
                  <tr className="h-[18px] bg-[#dadada]">
                    <th colSpan={2} scope="rowgroup" className="p-0 pl-[4px] text-left font-normal">
                      <span className="flex items-center justify-between pr-[6px]">
                        {group.title}
                        <Icon w={7} h={8} stroke="#222"><path d="M.5 3.500l3-3 3 3M.5 7.500l3-3 3 3" strokeWidth="1.300" /></Icon>
                      </span>
                    </th>
                  </tr>
                  {group.rows.map((row) => (
                    <PropRow key={row.name} id={`${group.title}-${row.name}`} row={row} />
                  ))}
                </tbody>
              ))}
            </table>
          </div>
          <div className="ml-px flex w-[15px] flex-col items-center bg-[#eee]">
            <div className="h-4" />
            <div className="flex h-[244px] w-full items-center justify-center rounded-xs border border-[#999] bg-linear-to-r from-[#f6f6f6] to-[#cfcfcf]">
              <Icon w={7} h={8}><path d="M0 .5h7M0 3.500h7M0 6.500h7" /></Icon>
            </div>
            <div className="flex-1" />
            <div className="flex h-4 items-center"><ScrollArrow dir="down" /></div>
          </div>
        </div>
        <div className="flex h-[26px] shrink-0 items-start justify-between pt-[2px] pr-[24px] pl-[2px]">
          <a href="#help" className="leading-[21px] text-[#0b61c9] underline">Properties help</a>
          <button type="button" disabled className="h-[21px] w-[73px] rounded-xs border border-[#adb2b5] bg-[#f4f4f4] text-[#838383]">
            Apply
          </button>
        </div>
      </div>
    </aside>
  )
}

/* ---------- drawing view ---------- */

function Elevation() {
  return (
    <svg className="absolute inset-0 size-full" fill="none" role="img" aria-label="South elevation">
      <g stroke="#7b9df0">
        <path d="M162.500 64v36M553.500 64v36M162 69.500h392M158 74l9-9M549 74l9-9" />
        <path d="M133.500 102v273M129 105.500h29M129 101l9 9M0 372.500h137M129 368l9 9" />
      </g>
      <rect x="162.500" y="105.500" width="391" height="267" fill="#6e8aca" stroke="#1d4ed0" />
      <path d="M553.500 105.500h-391v267" stroke="#10182c" strokeDasharray="5 4" />
      <path d="M553.500 106v266.500h-391" stroke="#37539a" strokeDasharray="5 4" />
      <path d="M164.500 107.500h387v263h-387zM221.500 107v264M223.500 107v264M385.500 107v264M387.500 107v264M387 171.500h164M387 173.500h164M387 271.500h164M387 273.500h164" stroke="#37539a" />
      <path d="M303 107v264" stroke="#37539a" strokeWidth="2" />
      <path d="M351.500 74v10M364.500 74v10M352 79.500h12M354 77.500l-2 2 2 2M362 77.500l2 2-2 2" stroke="#0a3cb0" />
      <g fill="#5b7fd8" stroke="#3d4760">
        <path d="M358 92.500l-3.500 11h7z" />
        <path d="M358 386.500l-3.500-11h7z" />
        <path d="M556.500 234.500v9l11-4.500z" />
      </g>
      <text x="358" y="63" textAnchor="middle" fontSize="11" fill="#0a3cb0" fontFamily="Noto Sans, sans-serif">
        11700.0
      </text>
    </svg>
  )
}

function NavBar() {
  return (
    <div className="absolute top-[29px] right-[1px] flex h-[117px] w-[35px] flex-col items-center rounded-md border-2 border-[#bdbdbd] bg-[#f3f3f3]">
      <Tool label="Close navigation bar" className="mr-px self-end">
        <Icon w={9} h={9} stroke="#fff"><circle cx="4.500" cy="4.500" r="4.500" fill="#a9a9a9" stroke="none" /><path d="M2.500 2.500l4 4M6.500 2.500l-4 4" /></Icon>
      </Tool>
      <Tool label="Steering wheel" className="mt-[8px] h-7">
        <Icon w={26} h={26} stroke="#909499">
          <path d="M11 2h10v10a9.500 9.500 0 1 1-10-10z" fill="#e4e6e9" />
          <circle cx="11.500" cy="11.500" r="6.500" fill="#f1f1f1" />
          <circle cx="11.500" cy="11.500" r="3" fill="#fff" />
          <text x="12" y="24" fontSize="10" fontWeight="700" fill="#6f9ccc" stroke="none" fontFamily="Open Sans, sans-serif">2D</text>
        </Icon>
      </Tool>
      <span className="my-[4px]"><Caret color="#888" /></span>
      <span className="w-[26px] border-t border-[#bbb]" />
      <Tool label="Zoom region" className="mt-[7px]">
        <Icon w={17} h={17} stroke="#6aa35a">
          <path d="M.5.500h11v11H.5z" fill="#bcdcae" />
          <circle cx="11" cy="11" r="3.500" fill="#fff" stroke="#8a8a8a" />
          <path d="M13.500 13.500l3 3" stroke="#8a8a8a" strokeWidth="1.600" />
        </Icon>
      </Tool>
      <span className="mt-[5px]"><Caret color="#888" /></span>
      <Tool label="Customize navigation bar" className="mt-auto mr-px self-end">
        <Icon w={9} h={9} stroke="#fff"><circle cx="4.500" cy="4.500" r="4.500" fill="#a9a9a9" stroke="none" /><path d="M2 3.500h5M2 5.500h5" /></Icon>
      </Tool>
    </div>
  )
}

const redX = <path d="M8.500 8l5.500 5.500M14 8l-5.500 5.500" stroke="#cf1f24" strokeWidth="2.200" />
const viewControls = [
  ['Detail level', <Icon w={17} h={14}><path d="M.5 1.500h16v11H.5z" fill="#f0f2f6" /></Icon>],
  ['Visual style', <Icon w={16} h={14}><path d="M.5 6.500l4-5h11v6l-4 5H.5zM.5 6.500h11l4-5M11.500 6.500v6" fill="#eee" /></Icon>],
  ['Sun path', <Icon w={16} h={15}><circle cx="7" cy="7" r="3.500" fill="#ffe37a" stroke="#e09a1a" /><path d="M7 0v2M7 12v2M0 7h2M2 2l1.500 1.500M12 2l-1.500 1.500M2 12l1.500-1.500" stroke="#e09a1a" />{redX}</Icon>],
  ['Shadows', <Icon w={16} h={15}><path d="M1 12.500h8" strokeWidth="2" /><circle cx="6" cy="6" r="4.500" fill="#b8dcf4" stroke="#4c88bb" />{redX}</Icon>],
  ['Crop view', <Icon w={17} h={15}><path d="M0 11h3V3h11M5 13V5h9v8M5 9h11" stroke={BLUE} />{redX}</Icon>],
  ['Show crop region', <Icon w={17} h={15}><path d="M0 11h3V3h11M5 13V5h4M5 9h4" stroke={BLUE} /><circle cx="12.500" cy="7.500" r="3" fill="#c7e4f7" stroke={BLUE} /><path d="M12.500 11v3" strokeWidth="2" /></Icon>],
  ['Temporary hide', <Icon w={16} h={12}><path d="M0 2l2-1 3 6M9 1l3-1 3 5" /><circle cx="6.500" cy="8" r="2.800" fill="#e3eef7" /><circle cx="12" cy="6" r="2.800" fill="#e3eef7" /></Icon>],
  ['Reveal hidden', <Icon w={9} h={12}><circle cx="4.500" cy="4" r="3" fill="#c7e4f7" stroke={BLUE} /><path d="M4.500 7.500v3" strokeWidth="2" /></Icon>],
  ['View properties', <Icon w={16} h={14}><path d="M1.500 2.500h12v9h-12z" stroke="#222" strokeWidth="1.500" /><path d="M3.500 1v2M6.500 1v2M9.500 1v2M3.500 11v2M6.500 11v2" stroke="#222" /><circle cx="11.500" cy="9.500" r="2.500" fill="#fff" /></Icon>],
  ['Analytical model', <Icon w={17} h={14}><path d="M1 12V4l3-3h8M4 12V4M7 12V4M1 4h8M1 7.500h10" /><path d="M1 9v4M6 9v4" stroke="#cf1f24" /><circle cx="13" cy="6" r="2.800" fill="#ffc765" stroke="#e0851a" /></Icon>],
] as [string, ReactNode][]

function DrawingView() {
  return (
    <main className="flex min-w-0 flex-1 flex-col border-t-2 border-l-2 border-[#6b6b6b] bg-[#f0f0f0]">
      <div className="flex min-h-0 flex-1">
        <div className="relative min-w-0 flex-1 overflow-hidden bg-white">
          <Elevation />
          <div className="absolute top-[6px] right-[2px] flex">
            <Tool label="Minimize view" className="h-4 w-[18px]"><Icon w={13} h={5}><path d="M.5.500h12v3.500H.5z" fill="#fff" /></Icon></Tool>
            <Tool label="Restore view" className="h-4 w-[18px]"><Icon w={12} h={12}><path d="M2.500 2.500v-2h9v9h-2M.5 2.500h9v9h-9zM3.500 5.500h3v3h-3z" /></Icon></Tool>
            <Tool label="Close view" className="h-4 w-[18px]"><Icon w={11} h={11}><path d="M.5.500h3l2 3 2-3h3l-3.500 5 3.500 5h-3l-2-3-2 3h-3l3.500-5z" fill="#fff" /></Icon></Tool>
          </div>
          <NavBar />
        </div>
        <div className="flex w-[18px] flex-col items-start bg-[#ebebeb] py-1">
          <span className="pl-[4px]"><ScrollArrow dir="up" /></span>
          <div className="flex-1" />
          <div className="h-[15px] w-[15px] rounded-xs border border-[#999] bg-linear-to-r from-[#f6f6f6] to-[#cfcfcf]" />
          <div className="flex-1" />
          <span className="pl-[4px]"><ScrollArrow dir="down" /></span>
        </div>
      </div>
      <div className="flex h-[18px] items-center text-[11px]">
        <span className="w-[77px] pl-6">1 : 100</span>
        {viewControls.map(([name, icon]) => (
          <Tool key={name} label={name} className="h-4 w-[21px]">{icon}</Tool>
        ))}
        <div className="flex h-full min-w-0 flex-1 items-center justify-between bg-[#e9e9e9] pr-1 pl-1">
          <ScrollArrow dir="left" />
          <div className="h-[15px] w-[15px] rounded-xs border border-[#999] bg-linear-to-b from-[#f6f6f6] to-[#cfcfcf]" />
          <ScrollArrow dir="right" />
        </div>
        <div className="flex w-5 justify-end self-end pr-[3px] pb-px">
          <Grip />
        </div>
      </div>
    </main>
  )
}

function Grip() {
  return (
    <Icon w={10} h={10} stroke="none">
      <path d="M8 0h2v2H8zM4 4h2v2H4zM8 4h2v2H8zM0 8h2v2H0zM4 8h2v2H4zM8 8h2v2H8z" fill="#b5b5b5" />
    </Icon>
  )
}

/* ---------- project browser ---------- */

type Cell = 'plus' | 'minus' | 'line' | 'tee' | 'end' | 'blank'

const legendsIcon = (
  <Icon w={16} h={15}>
    <path d="M.5.500h15v14H.5z" fill="#fff" />
    <path d="M0 0h16v3H0z" fill="#6d7f8c" stroke="none" />
    <path d="M2 5h4v3H2zM2 10h4v3H2z" fill={INK} stroke="none" />
    <path d="M8 5.500h5M8 7.500h5M8 10.500h5M8 12.500h5" />
  </Icon>
)
const viewsRootIcon = (
  <Icon w={16} h={15}>
    <path d="M4 1H1.500v3M12 1h2.500v3M4 14H1.500v-3M12 14h2.500v-3" />
    <path d="M4.500 6l2-2h5v5l-2 2h-5zM9.500 11V6.500" />
  </Icon>
)
const scheduleIcon = (
  <Icon w={16} h={12}>
    <path d="M.5.500h15v11H.5z" fill="#fff" />
    <path d="M0 0h16v3H0z" fill="#6d7f8c" stroke="none" />
    <path d="M.5 5.500h15M.5 8.500h15M5.500 3v9M10.500 3v9" />
  </Icon>
)
const sheetsIcon = (
  <Icon w={16} h={13}>
    <path d="M.5.500h11l4 4v8H.5zM11.500.500v4h4" fill="#e6e8eb" />
    <path d="M2.500 2.500h7v8M2.500 5.500h4v5h-4zM9.500 10.500h3v-4" />
  </Icon>
)
const familiesIcon = (
  <Icon w={16} h={15}>
    <path d="M1.500 1.500h6v5h-6zM9.500 1.500h5v12h-12v-4h7z" fill="#e0e2e6" strokeWidth="1.200" />
  </Icon>
)

interface Node {
  cells: Cell[]
  name: string
  icon?: ReactNode
  selected?: boolean
}

const families = ['Annotation Symbols', 'Cable Trays', 'Ceilings', 'Columns', 'Conduits', 'Curtain Panels', 'Curtain Systems', 'Curtain Wall Mullions', 'Detail Items', 'Division Profiles', 'Doors']

const tree: Node[] = [
  { cells: ['minus'], name: 'Views (all)', icon: viewsRootIcon },
  { cells: ['line', 'minus'], name: 'Floor Plans' },
  { cells: ['line', 'line', 'tee'], name: 'Level 1' },
  { cells: ['line', 'line', 'tee'], name: 'Level 2' },
  { cells: ['line', 'line', 'end'], name: 'Site' },
  { cells: ['line', 'plus'], name: 'Ceiling Plans' },
  { cells: ['line', 'plus'], name: '3D Views' },
  { cells: ['line', 'minus'], name: 'Elevations (12mm Circle)' },
  { cells: ['line', 'blank', 'tee'], name: 'East' },
  { cells: ['line', 'blank', 'tee'], name: 'North' },
  { cells: ['line', 'blank', 'tee'], name: 'South', selected: true },
  { cells: ['line', 'blank', 'end'], name: 'West' },
  { cells: ['plus'], name: 'Legends', icon: legendsIcon },
  { cells: ['minus'], name: 'Schedules/Quantities', icon: scheduleIcon },
  { cells: ['line', 'end'], name: 'View List' },
  { cells: ['minus'], name: 'Sheets (all)', icon: sheetsIcon },
  { cells: ['line', 'plus'], name: "A99 - What's New in Templates" },
  { cells: ['minus'], name: 'Families', icon: familiesIcon },
  ...families.map((name): Node => ({ cells: ['line', 'plus'], name })),
]

function TreeCell({ kind }: { kind: Cell }) {
  const box = kind === 'plus' || kind === 'minus'
  return (
    <Icon w={20} h={18} stroke="#9a9a9a">
      {kind !== 'blank' && <path d={kind === 'end' ? 'M7.500 0v10' : 'M7.500 0v18'} strokeDasharray="1 1" />}
      {(box || kind === 'tee' || kind === 'end') && <path d="M8 10.500h12" strokeDasharray="1 1" />}
      {box && <rect x="3.500" y="6.500" width="8" height="8" rx="1" fill="#f7f7f7" stroke="#8e8e8e" />}
      {box && <path d={kind === 'plus' ? 'M5 10.500h5M7.500 8v5' : 'M5 10.500h5'} stroke="#2d4fa0" />}
    </Icon>
  )
}

function ProjectBrowser() {
  return (
    <aside className="ml-[5px] flex w-[232px] shrink-0 flex-col bg-[#f0f0f0] text-[11px]">
      <h2 className="flex h-[19px] items-center justify-between bg-[#bccad9] pt-px pr-1 pl-[3px] text-[#55606b]">
        Project Browser - Home work 1
        <Tool label="Close project browser" className="size-3"><Icon w={9} h={8} stroke="#000"><path d="M.5.500l7.500 7M8 .5l-7.500 7" strokeWidth="1.600" /></Icon></Tool>
      </h2>
      <div className="mt-[2px] flex min-h-0 flex-1 flex-col border border-l-2 border-[#666] bg-white">
        <div className="flex min-h-0 flex-1">
          <ul className="min-w-0 flex-1 overflow-hidden">
            {tree.map((node) => (
              <li key={node.name} className="flex h-[18px] items-center whitespace-nowrap">
                {node.cells.map((kind, i) => (
                  <TreeCell key={i} kind={kind} />
                ))}
                {node.icon}
                <span className={`ml-[2px] self-start px-[3px] leading-[17px] ${node.selected ? 'bg-[#e2e2e2] font-bold' : ''}`}>{node.name}</span>
              </li>
            ))}
          </ul>
          <div className="flex w-4 flex-col items-center bg-[#eee] pb-1">
            <div className="flex h-[18px] items-center"><ScrollArrow dir="up" /></div>
            <div className="flex h-[179px] w-[15px] items-center justify-center rounded-xs border border-[#999] bg-linear-to-r from-[#f6f6f6] to-[#cfcfcf]">
              <Icon w={7} h={8}><path d="M0 .5h7M0 3.500h7M0 6.500h7" /></Icon>
            </div>
            <div className="flex-1" />
            <ScrollArrow dir="down" />
          </div>
        </div>
        <div className="flex h-[15px] shrink-0 items-center bg-[#eee] pr-5 pl-1">
          <ScrollArrow dir="left" />
          <div className="ml-[6px] flex h-[15px] w-[134px] items-center justify-center rounded-xs border border-[#999] bg-linear-to-b from-[#f6f6f6] to-[#cfcfcf]">
            <Icon w={8} h={7}><path d="M.5 0v7M3.500 0v7M6.500 0v7" /></Icon>
          </div>
          <div className="flex-1" />
          <ScrollArrow dir="right" />
        </div>
      </div>
    </aside>
  )
}

/* ---------- status bar ---------- */

function StatusSelect({ label, value, className }: { label: string; value: string; className: string }) {
  return (
    <div className={`relative h-[21px] ${className}`}>
      <select aria-label={label} className="h-full w-full appearance-none bg-white px-1 text-[#7d7d7d]">
        <option>{value}</option>
      </select>
      <span className="pointer-events-none absolute top-[10px] right-1">
        <Icon w={7} h={4} stroke="none"><path d="M0 0h7L3.500 4z" fill="#999" /></Icon>
      </span>
    </div>
  )
}

function StatusBar() {
  return (
    <footer className="flex h-[26px] items-center gap-[3px] border-y border-[#777] bg-linear-to-b from-[#e2e2e2] to-[#b9b9b9] px-px text-[11px]">
      <p className="w-[482px] shrink-0">Click to select, TAB for alternates, CTRL adds, SHIFT unselects.</p>
      <Tool label="Worksets" className="h-[22px] w-6 bg-[#d4d4d4]">
        <Icon w={17} h={16}>
          <path d="M6 6V2l3-1 3 1v4" fill="#bfe3a8" stroke="#3c8a28" strokeWidth="1.300" />
          <path d="M1 8l3-2 4 2v5l-3 2-4-2zM1 8l4 1.500L8 8M5 9.500V15" fill="#a9d5ec" stroke={BLUE} />
          <path d="M10.500 5v3l2 1.500v6h2v-6l2-1.500V5" fill="#fff" />
        </Icon>
      </Tool>
      <StatusSelect label="Active workset" value="" className="w-[205px]" />
      <button type="button" className="flex h-[22px] w-[52px] items-center gap-[6px] bg-[#d4d4d4] pl-[5px]">
        <Icon w={15} h={16} stroke="#999"><path d="M4 1h9l1 2-1 2H9l-2 3H5l1-3H4L3 3z" fill="#e6e6e6" /><path d="M4 8l5 7H0z" fill="#999" /></Icon>
        :0
      </button>
      <Tool label="Editable only" className="h-[22px] w-6 bg-[#d4d4d4]">
        <Icon w={16} h={16}><rect x=".5" y=".5" width="15" height="15" rx="1" fill="#fff" /><path d="M1 1h14v3H1z" fill="#5b6b7c" stroke="none" /><path d="M3 6.500h3M7 8.500h6M7 10.500h6M5 12.500h8M4 9.500h1" /></Icon>
      </Tool>
      <Tool label="Add to set" className="h-[22px] w-6 bg-[#d4d4d4]">
        <Icon w={16} h={16} stroke="none"><path d="M1 0h15v15H9V9L1 6z" fill="#9b9b9b" /><path d="M.5 10h4V7l4 4-4 4v-3h-4z" fill="#aaa" stroke="#fff" /></Icon>
      </Tool>
      <StatusSelect label="Design option" value="Main Model" className="w-[156px]" />
      <div className="flex-1" />
      <Tool label="Select links" className="h-[22px] w-6 bg-[#cfcfcf]">
        <Icon w={17} h={16}>
          <rect x="1" y="2" width="7" height="5" rx="2.500" stroke="#e0a010" strokeWidth="2" />
          <rect x="8" y="2" width="7" height="5" rx="2.500" stroke="#e0a010" strokeWidth="2" />
          <path d="M7 5v9l2-2 2 4 1.500-1L11 11.500h3z" fill="#fff" />
        </Icon>
      </Tool>
      <Tool label="Select underlay" className="h-[22px] w-6 bg-[#cfcfcf]">
        <Icon w={17} h={16}>
          <path d="M1 9l6-7h9l-5 7zM1 13h8l4-4" stroke={BLUE} strokeWidth="1.300" />
          <path d="M9 5v9l2-2 2 4 1.500-1L13 11.500h3z" fill="#fff" />
        </Icon>
      </Tool>
      <div className="flex w-[10px] self-end"><Grip /></div>
    </footer>
  )
}

function AppButton() {
  return (
    <button type="button" aria-label="Application menu" className="absolute top-0 left-0 z-10 flex h-10 w-10 items-center gap-px border border-[#222] bg-linear-to-b from-[#b5b5b5] to-[#6e6e6e] pl-[4px]">
      <Icon w={23} h={28} stroke="none">
        <path d="M5 4l5-3 6 2 3 5-2 6-7 3-4-4z" fill="#12349a" />
        <path d="M10 1l6 2 3 5-2 6-7 2z" fill="#0a2264" />
        <path d="M2 6l5-2 2 11-1 6-7 5z" fill="#1c49b4" />
        <path d="M7 15l5-2 10 10-6 3z" fill="#2453c2" />
        <path d="M12 13l10 10-4 1z" fill="#0f2d7a" />
      </Icon>
      <Icon w={8} h={5} stroke="none"><path d="M0 0h8L4 5z" fill="#333" /></Icon>
    </button>
  )
}

export default function App() {
  return (
    <div className="relative flex h-screen flex-col overflow-hidden bg-[linear-gradient(90deg,#f4f4f4_0,#f4f4f4_26%,#2b3036_27%,#4a3a3c_45%,#2f3439_80%,#45494d_100%)] pt-[7px] font-['Noto_Sans','Open_Sans',sans-serif]">
      <WindowButtons />
      <div className="relative flex min-h-0 flex-1 flex-col pr-1 pl-2">
        <div className="relative">
          <AppButton />
          <TitleRow />
          <Tabs />
        </div>
        <Ribbon />
        <div className="flex h-[27px] items-center bg-[#d8e3d0] pt-[2px] pl-2 text-[11px] text-black">Modify | Walls</div>
        <div className="flex min-h-0 flex-1 bg-[#f0f0f0]">
          <Properties />
          <DrawingView />
          <ProjectBrowser />
        </div>
        <StatusBar />
      </div>
      <div className="h-[4px] bg-linear-to-r from-[#f0f0f0] via-[#dcdcdc] to-[#555]" />
    </div>
  )
}
